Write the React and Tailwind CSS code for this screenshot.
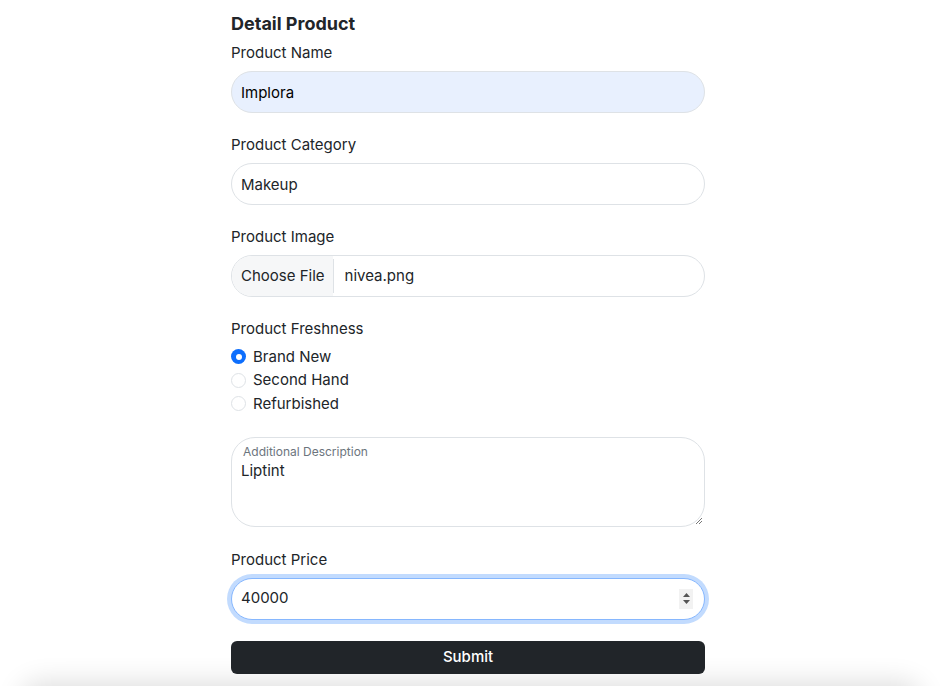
import { useState } from 'react'

const font = { fontFamily: 'Inter, "Noto Sans", sans-serif' }

function Label({ children }) {
  return <div className="h-[22px] text-[15px] leading-[22px] text-[#212529] mb-[7px]">{children}</div>
}

function Radio({ label, checked }) {
  return (
    <div className="flex h-[23.5px] items-center gap-[7px]">
      {checked ? (
        <span className="flex h-[15px] w-[15px] items-center justify-center rounded-full bg-[#0d6efd]">
          <span className="h-[6px] w-[6px] rounded-full bg-white" />
        </span>
      ) : (
        <span className="h-[15px] w-[15px] rounded-full border border-[#dee2e6] bg-white" />
      )}
      <span className="text-[15px] text-[#212529]">{label}</span>
    </div>
  )
}

export default function App() {
  const [fresh] = useState('Brand New')
  return (
    <div className="min-h-screen bg-white text-[#212529]" style={font}>
      <div className="flex justify-center pr-[6px]">
        <form className="w-[474px] pt-[11px]" onSubmit={e => e.preventDefault()}>
          <h2 className="mb-[5px] h-[26px] text-[18px] font-bold leading-[26px]">Detail Product</h2>

          <Label>Product Name</Label>
          <input
            readOnly
            defaultValue="Implora"
            className="mb-[21px] block h-[42px] w-full rounded-full border border-[#dee2e6] bg-[#e8f0fe] px-[9px] text-[15px] text-black outline-none"
          />

          <Label>Product Category</Label>
          <input
            readOnly
            defaultValue="Makeup"
            className="mb-[21px] block h-[42px] w-full rounded-full border border-[#dee2e6] bg-white px-[9px] text-[15px] text-[#212529] outline-none"
          />

          <Label>Product Image</Label>
          <div className="mb-[21px] flex h-[42px] w-full items-center overflow-hidden rounded-full border border-[#dee2e6] bg-white text-[15px]">
            <div className="flex h-full items-center bg-[#f6f7f8] pl-[9px] pr-[8px]">Choose File</div>
            <div className="h-[34px] w-px bg-[#dee2e6]" />
            <div className="pl-[11px]">nivea.png</div>
          </div>

          <div className="h-[22px] text-[15px] leading-[22px] mb-[5px]">Product Freshness</div>
          <div className="mb-[21px]">
            {['Brand New', 'Second Hand', 'Refurbished'].map(o => (
              <Radio key={o} label={o} checked={o === fresh} />
            ))}
          </div>

          <div className="relative mb-[22px] h-[90px] w-full rounded-[24px] border border-[#dee2e6] bg-white">
            <div className="absolute left-[11px] top-[6px] text-[12px] leading-4 text-[#6c757d]">Additional Description</div>
            <div className="absolute left-[9px] top-[23px] text-[15px] leading-5">Liptint</div>
            <svg className="absolute bottom-[1px] right-[1px]" width="8" height="8" viewBox="0 0 8 8">
              <path d="M7 1L1 7M7 4L4 7" stroke="#777" strokeWidth="1" />
            </svg>
          </div>

          <Label>Product Price</Label>
          <div className="relative mb-[21px] flex h-[42px] w-full items-center rounded-full border border-[#86b7fe] bg-white px-[9px] shadow-[0_0_0_4px_rgba(13,110,253,0.25)]">
            <span className="text-[15px]">40000</span>
            <div className="absolute right-[11px] top-[10px] flex h-[20px] w-[14px] flex-col items-center justify-center gap-[3px] bg-[#f2f2f2]">
              <svg width="7" height="4" viewBox="0 0 7 4"><path d="M0 4L3.5 0L7 4Z" fill="#555" /></svg>
              <svg width="7" height="4" viewBox="0 0 7 4"><path d="M0 0L3.5 4L7 0Z" fill="#555" /></svg>
            </div>
          </div>

          <button
            type="submit"
            className="block h-[33px] w-full rounded-[6px] bg-[#212529] text-[15px] font-medium text-white"
          >
            Submit
          </button>
        </form>
      </div>
      <div className="mx-auto mt-[13px] h-10 w-[900px] rounded-[40px] bg-white shadow-[0_-4px_28px_rgba(0,0,0,0.14)]" />
    </div>
  )
}
